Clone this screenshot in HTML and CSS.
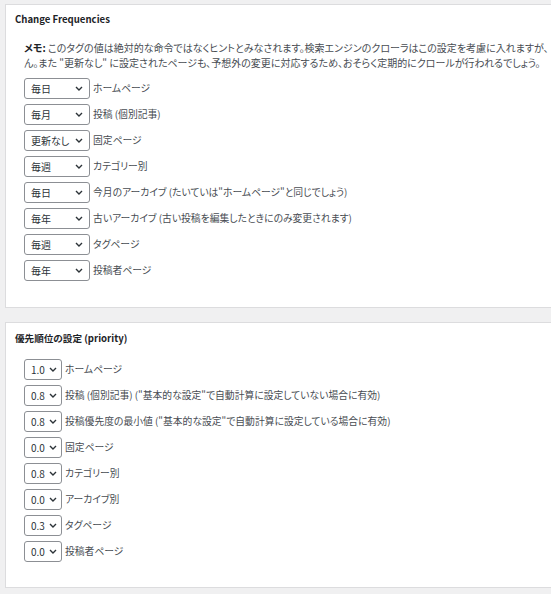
FILE: index.html
```html
<!DOCTYPE html>
<html lang="ja">
<head>
<meta charset="utf-8">
<title>Sitemap settings</title>
<link rel="stylesheet" href="styles.css">
</head>
<body>
<div class="page">
  <section class="postbox freq">
    <h3 class="box-title">Change Frequencies</h3>
    <div class="inside">
      <p class="memo"><b>メモ:</b> このタグの値は絶対的な命令ではなくヒントとみなされます。検索エンジンのクローラはこの設定を考慮に入れますが、<br>ん。また "更新なし" に設定されたページも、予想外の変更に対応するため、おそらく定期的にクロールが行われるでしょう。</p>
      <ul class="rows">
        <li class="row"><div class="sel wide"><span>毎日</span><svg class="chev" viewBox="0 0 8 5"><path d="M1 1l3 3 3-3"/></svg></div><span class="label">ホームページ</span></li>
        <li class="row"><div class="sel wide"><span>毎月</span><svg class="chev" viewBox="0 0 8 5"><path d="M1 1l3 3 3-3"/></svg></div><span class="label">投稿 (個別記事)</span></li>
        <li class="row"><div class="sel wide"><span>更新なし</span><svg class="chev" viewBox="0 0 8 5"><path d="M1 1l3 3 3-3"/></svg></div><span class="label">固定ページ</span></li>
        <li class="row"><div class="sel wide"><span>毎週</span><svg class="chev" viewBox="0 0 8 5"><path d="M1 1l3 3 3-3"/></svg></div><span class="label">カテゴリー別</span></li>
        <li class="row"><div class="sel wide"><span>毎日</span><svg class="chev" viewBox="0 0 8 5"><path d="M1 1l3 3 3-3"/></svg></div><span class="label">今月のアーカイブ (たいていは"ホームページ"と同じでしょう)</span></li>
        <li class="row"><div class="sel wide"><span>毎年</span><svg class="chev" viewBox="0 0 8 5"><path d="M1 1l3 3 3-3"/></svg></div><span class="label">古いアーカイブ (古い投稿を編集したときにのみ変更されます)</span></li>
        <li class="row"><div class="sel wide"><span>毎週</span><svg class="chev" viewBox="0 0 8 5"><path d="M1 1l3 3 3-3"/></svg></div><span class="label">タグページ</span></li>
        <li class="row"><div class="sel wide"><span>毎年</span><svg class="chev" viewBox="0 0 8 5"><path d="M1 1l3 3 3-3"/></svg></div><span class="label">投稿者ページ</span></li>
      </ul>
    </div>
  </section>
  <section class="postbox prio">
    <h3 class="box-title">優先順位の設定 (priority)</h3>
    <div class="inside">
      <ul class="rows">
        <li class="row"><div class="sel narrow"><span>1.0</span><svg class="chev" viewBox="0 0 8 5"><path d="M1 1l3 3 3-3"/></svg></div><span class="label">ホームページ</span></li>
        <li class="row"><div class="sel narrow"><span>0.8</span><svg class="chev" viewBox="0 0 8 5"><path d="M1 1l3 3 3-3"/></svg></div><span class="label">投稿 (個別記事) ("基本的な設定"で自動計算に設定していない場合に有効)</span></li>
        <li class="row"><div class="sel narrow"><span>0.8</span><svg class="chev" viewBox="0 0 8 5"><path d="M1 1l3 3 3-3"/></svg></div><span class="label">投稿優先度の最小値 ("基本的な設定"で自動計算に設定している場合に有効)</span></li>
        <li class="row"><div class="sel narrow"><span>0.0</span><svg class="chev" viewBox="0 0 8 5"><path d="M1 1l3 3 3-3"/></svg></div><span class="label">固定ページ</span></li>
        <li class="row"><div class="sel narrow"><span>0.8</span><svg class="chev" viewBox="0 0 8 5"><path d="M1 1l3 3 3-3"/></svg></div><span class="label">カテゴリー別</span></li>
        <li class="row"><div class="sel narrow"><span>0.0</span><svg class="chev" viewBox="0 0 8 5"><path d="M1 1l3 3 3-3"/></svg></div><span class="label">アーカイブ別</span></li>
        <li class="row"><div class="sel narrow"><span>0.3</span><svg class="chev" viewBox="0 0 8 5"><path d="M1 1l3 3 3-3"/></svg></div><span class="label">タグページ</span></li>
        <li class="row"><div class="sel narrow"><span>0.0</span><svg class="chev" viewBox="0 0 8 5"><path d="M1 1l3 3 3-3"/></svg></div><span class="label">投稿者ページ</span></li>
      </ul>
    </div>
  </section>
</div>
</body>
</html>
```

FILE: styles.css
```css
html, body {
  margin: 0;
  padding: 0;
  background: #f0f0f1;
  overflow: hidden;
}
body {
  font-family: "Noto Sans CJK JP", "Noto Sans", sans-serif;
  font-size: 10px;
  color: #474c52;
  font-feature-settings: "palt";
}
.page {
  padding: 4px 0 0 5px;
}
.postbox {
  background: #fff;
  border: 1px solid #dcdcde;
  border-right: none;
  box-sizing: border-box;
  overflow: hidden;
}
.freq {
  height: 304px;
  margin-bottom: 14px;
}
.prio {
  height: 266px;
}
.box-title {
  margin: 0;
  font-size: 9.6px;
  font-weight: 600;
  line-height: 16px;
  color: #1d2327;
  padding: 6px 0 0 9px;
}
.prio .box-title {
  padding-top: 7px;
}
.inside {
  padding: 0 0 0 18px;
}
.memo {
  margin: 13px 0 0;
  line-height: 15px;
  white-space: nowrap;
  overflow: hidden;
}
.memo b {
  font-weight: 700;
  color: #1d2327;
}
.rows {
  list-style: none;
  margin: 8px 0 0;
  padding: 0;
  display: flex;
  flex-direction: column;
  gap: 5px;
}
.prio .rows {
  margin-top: 13px;
}
.row {
  display: flex;
  align-items: center;
  gap: 3px;
  height: 21px;
}
.sel {
  box-sizing: border-box;
  height: 21px;
  border: 1px solid #8c8f94;
  border-radius: 3px;
  background: #fff;
  display: flex;
  align-items: center;
  justify-content: space-between;
  padding: 0 6px 0 6px;
  color: #2c3338;
  font-size: 10px;
  flex: none;
}
.sel.wide {
  width: 66px;
}
.sel.narrow {
  width: 38px;
  padding: 0 4px 0 6px;
}
.chev {
  width: 8px;
  height: 5px;
  fill: none;
  stroke: #2c3338;
  stroke-width: 1.4;
  flex: none;
}
.label {
  white-space: nowrap;
  line-height: 15px;
  font-size: 9.8px;
}
```
